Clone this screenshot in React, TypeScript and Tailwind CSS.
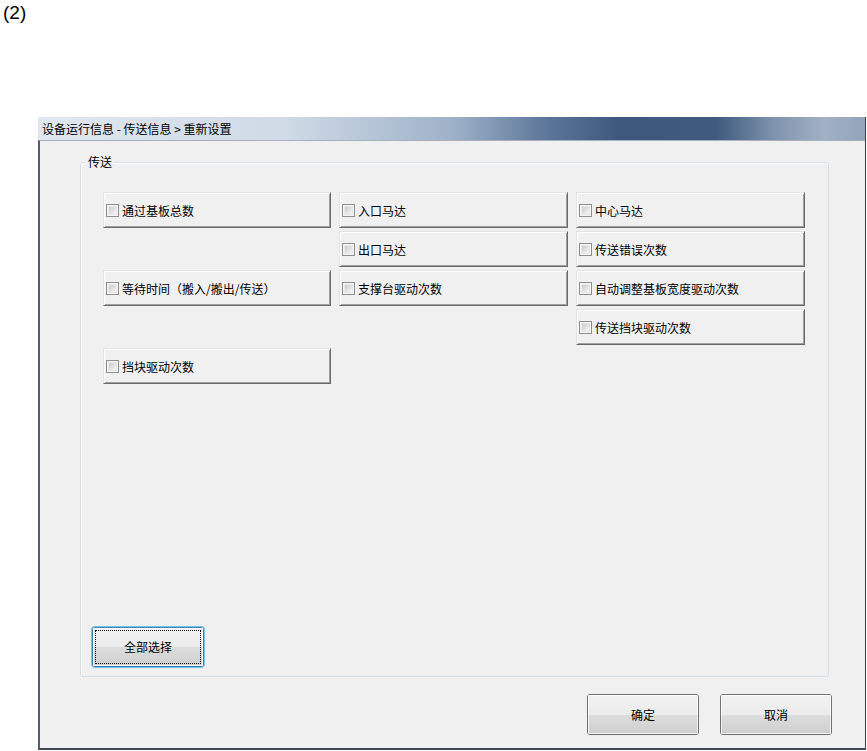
import React from "react";

const cjk = { fontFamily: '"Noto Sans CJK SC", "Noto Sans", sans-serif' };

function Check() {
  return (
    <span className="w-[13px] h-[13px] shrink-0 border border-[#8e8f8f] bg-[#f4f4f4] flex">
      <span className="flex-1 m-[1px] bg-gradient-to-br from-[#cbcbcb] to-[#f6f6f6] border border-[#e9e9e9]" />
    </span>
  );
}

function Item({ label, pos }: { label: string; pos: string }) {
  return (
    <div
      className={`${pos} h-[36px] bg-[#f0f0f0] border border-t-[#e3e3e3] border-l-[#e3e3e3] border-b-[#696969] border-r-[#696969] shadow-[inset_1px_1px_#ffffff,inset_-1px_-1px_#a0a0a0] flex items-center pl-[2px] gap-[3px]`}
    >
      <Check />
      <span className="text-[12px] leading-none text-black pt-[1px]">{label}</span>
    </div>
  );
}

function Win7Button({ label, focused, className }: { label: string; focused?: boolean; className: string }) {
  return (
    <div
      className={`${className} rounded-[3px] border ${
        focused ? "border-[#3c7fb1] shadow-[0_0_0_1px_#6cc6ec]" : "border-[#707070]"
      } flex flex-col overflow-hidden relative`}
    >
      <div className="flex-1 bg-gradient-to-b from-[#f2f2f2] to-[#ebebeb] border-t border-l border-r border-white" />
      <div className="flex-1 bg-gradient-to-b from-[#dddddd] to-[#cfcfcf] border-b border-l border-r border-[#f4f4f4]" />
      {focused && (
        <div className="absolute inset-[2px] border border-dotted border-black" />
      )}
      <span className="absolute inset-0 flex items-center justify-center text-[12px] text-black">{label}</span>
    </div>
  );
}

export default function App() {
  return (
    <div className="w-[867px] h-[751px] bg-white overflow-hidden" style={cjk}>
      <div
        className="pl-[3px] pt-[1px] h-[117px] text-[19px] leading-[24px] text-black"
        style={{ fontFamily: '"Liberation Sans", Arial, sans-serif' }}
      >
        (2)
      </div>
      <div className="ml-[38px] w-[828px] h-[633px] flex flex-col border-r border-r-[#3a4250]">
        <div className="h-[23px] shrink-0 flex items-center pl-[4px] text-[12px] text-black bg-[linear-gradient(to_right,#e0e7ef_0%,#cfdae6_30%,#9fb2c9_50%,#5a7497_62%,#3d5a7e_70%,#3e5a7d_82%,#7f93ae_89%,#a2b1c4_95%,#93a4bb_100%)]">
          设备运行信息&nbsp;-&nbsp;传送信息&nbsp;&gt;&nbsp;重新设置
        </div>
        <div className="flex-1 flex flex-col bg-[#f0f0f0] border-l-2 border-l-[#525e6e] border-b-2 border-b-[#3f4754] border-t border-t-[#a7b1be]">
          <div className="pt-[21px] pl-[40px] pr-[36px]">
            <div className="relative h-[515px] border border-[#d5dfe5] rounded-[3px] shadow-[inset_1px_1px_#ffffff] flex flex-col">
              <span className="absolute left-[5px] -top-[8px] px-[2px] bg-[#f0f0f0] text-[12px] leading-[14px] text-black">
                传送
              </span>
              <div className="mt-[29px] ml-[22px] grid grid-cols-[228px_229px_229px] gap-x-[8px] gap-y-[3px] grid-rows-[36px_36px_36px_36px_36px]">
                <Item label="通过基板总数" pos="col-start-1 row-start-1" />
                <Item label="入口马达" pos="col-start-2 row-start-1" />
                <Item label="中心马达" pos="col-start-3 row-start-1" />
                <Item label="出口马达" pos="col-start-2 row-start-2" />
                <Item label="传送错误次数" pos="col-start-3 row-start-2" />
                <Item label="等待时间（搬入/搬出/传送）" pos="col-start-1 row-start-3" />
                <Item label="支撑台驱动次数" pos="col-start-2 row-start-3" />
                <Item label="自动调整基板宽度驱动次数" pos="col-start-3 row-start-3" />
                <Item label="传送挡块驱动次数" pos="col-start-3 row-start-4" />
                <Item label="挡块驱动次数" pos="col-start-1 row-start-5" />
              </div>
              <div className="mt-auto mb-[9px] ml-[11px]">
                <Win7Button label="全部选择" focused className="w-[112px] h-[40px]" />
              </div>
            </div>
          </div>
          <div className="mt-[17px] flex justify-end gap-[21px] pr-[33px]">
            <Win7Button label="确定" className="w-[112px] h-[41px]" />
            <Win7Button label="取消" className="w-[112px] h-[41px]" />
          </div>
        </div>
      </div>
    </div>
  );
}
